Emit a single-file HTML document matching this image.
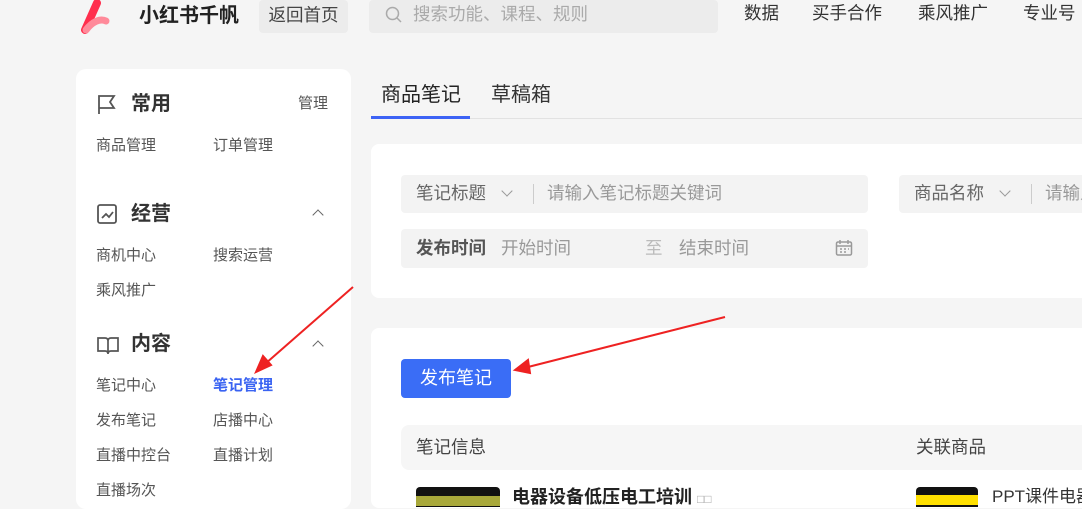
<!DOCTYPE html><html><head><meta charset="utf-8"><style>
*{margin:0;padding:0;box-sizing:border-box}
body{width:1082px;height:502px;overflow:hidden;background:#f5f5f5;font-family:"Liberation Sans","Noto Sans CJK SC",sans-serif;position:relative;color:#333}
.a{position:absolute;white-space:nowrap;line-height:1.2}
.nav{font-size:17.5px;color:#333;top:3px}
.side{left:76px;top:69px;width:275px;height:440px;background:#fff;border-radius:10px}
.st{font-size:20px;font-weight:bold;color:#333}
.it{font-size:15px;color:#555}
.card{background:#fff;border-radius:8px}
.gray{background:#f3f3f3;border-radius:4px}
.ph{font-size:17.5px;color:#999}
.chev{width:8px;height:8px;border-left:1.5px solid #666;border-top:1.5px solid #666;transform:rotate(45deg)}
</style></head><body>
<svg class="a" style="left:80px;top:0" width="32" height="36" viewBox="0 0 32 36"><path d="M5 30 L17 3" stroke="#ff2e4d" stroke-width="8" stroke-linecap="round"/><path d="M6 30 C12 22 20 18 26 21" stroke="#ff8a9a" stroke-width="7" fill="none" stroke-linecap="round"/></svg>
<div class="a" style="left:139px;top:4px;font-size:20px;font-weight:bold;color:#222">小红书千帆</div>
<div class="a gray" style="left:259px;top:0;width:89px;height:33px;background:#ececec;font-size:17.5px;color:#444;text-align:center;line-height:31px">返回首页</div>
<div class="a gray" style="left:369px;top:0;width:349px;height:33px;background:#ececec"></div>
<svg class="a" style="left:385px;top:6px" width="18" height="18"><circle cx="7.5" cy="7.5" r="6" stroke="#aaa" stroke-width="1.5" fill="none"/><path d="M12 12l4 4" stroke="#aaa" stroke-width="1.5"/></svg>
<div class="a ph" style="left:413px;top:4px;color:#aaa">搜索功能、课程、规则</div>
<div class="a nav" style="left:744px">数据</div><div class="a nav" style="left:812px">买手合作</div><div class="a nav" style="left:918px">乘风推广</div><div class="a nav" style="left:1023px">专业号</div>

<div class="a side"></div>
<svg class="a" style="left:96px;top:93px" width="22" height="22"><path d="M3 21V3h15l-4 6 4 6H3" stroke="#555" stroke-width="1.8" fill="none"/></svg>
<div class="a st" style="left:131px;top:92px">常用</div>
<div class="a it" style="left:298px;top:95px">管理</div>
<div class="a it" style="left:96px;top:137px">商品管理</div><div class="a it" style="left:213px;top:137px">订单管理</div>
<svg class="a" style="left:96px;top:203px" width="22" height="22"><rect x="2" y="2" width="18" height="18" rx="2" stroke="#555" stroke-width="1.8" fill="none"/><path d="M6 15l4-4 3 3 4-5" stroke="#555" stroke-width="1.8" fill="none"/></svg>
<div class="a st" style="left:131px;top:202px">经营</div>
<div class="a chev" style="left:314px;top:211px"></div>
<div class="a it" style="left:96px;top:247px">商机中心</div><div class="a it" style="left:213px;top:247px">搜索运营</div>
<div class="a it" style="left:96px;top:282px">乘风推广</div>
<svg class="a" style="left:96px;top:334px" width="24" height="22"><path d="M2 4h7c2 0 3 1 3 3v13c0-2-1-3-3-3H2zM22 4h-7c-2 0-3 1-3 3v13c0-2 1-3 3-3h7z" stroke="#555" stroke-width="1.7" fill="none"/></svg>
<div class="a st" style="left:131px;top:332px">内容</div>
<div class="a chev" style="left:314px;top:342px"></div>
<div class="a it" style="left:96px;top:377px">笔记中心</div><div class="a it" style="left:213px;top:377px;color:#3a63f2;font-weight:bold">笔记管理</div>
<div class="a it" style="left:96px;top:412px">发布笔记</div><div class="a it" style="left:213px;top:412px">店播中心</div>
<div class="a it" style="left:96px;top:447px">直播中控台</div><div class="a it" style="left:213px;top:447px">直播计划</div>
<div class="a it" style="left:96px;top:482px">直播场次</div>

<div class="a" style="left:371px;top:118px;width:711px;height:1px;background:#e2e2e2"></div>
<div class="a" style="left:381px;top:83px;font-size:20px;color:#222">商品笔记</div>
<div class="a" style="left:371px;top:116px;width:99px;height:3px;background:#3d63f5"></div>
<div class="a" style="left:491px;top:83px;font-size:20px;color:#333">草稿箱</div>

<div class="a card" style="left:371px;top:144px;width:720px;height:154px"></div>
<div class="a gray" style="left:401px;top:175px;width:467px;height:38px"></div>
<div class="a" style="left:416px;top:183px;font-size:17.5px;color:#666">笔记标题</div>
<div class="a chev" style="left:503px;top:187px;transform:rotate(225deg);border-color:#999"></div>
<div class="a" style="left:533px;top:184px;width:1px;height:20px;background:#ccc"></div>
<div class="a ph" style="left:547px;top:183px">请输入笔记标题关键词</div>
<div class="a gray" style="left:899px;top:175px;width:190px;height:38px"></div>
<div class="a" style="left:914px;top:183px;font-size:17.5px;color:#666">商品名称</div>
<div class="a chev" style="left:1001px;top:187px;transform:rotate(225deg);border-color:#999"></div>
<div class="a" style="left:1031px;top:184px;width:1px;height:20px;background:#ccc"></div>
<div class="a ph" style="left:1045px;top:183px">请输入</div>
<div class="a gray" style="left:401px;top:229px;width:467px;height:39px"></div>
<div class="a" style="left:416px;top:238px;font-size:17.5px;font-weight:bold;color:#555">发布时间</div>
<div class="a ph" style="left:501px;top:238px">开始时间</div>
<div class="a ph" style="left:645px;top:238px;color:#bbb">至</div>
<div class="a ph" style="left:679px;top:238px">结束时间</div>
<svg class="a" style="left:835px;top:239px" width="18" height="18"><rect x="1.5" y="3" width="15" height="13" rx="1.5" stroke="#999" stroke-width="1.5" fill="none"/><path d="M1.5 7h15M5 1v4M13 1v4M5 10h2M9 10h2M13 10h1M5 13h2M9 13h2" stroke="#999" stroke-width="1.5"/></svg>

<div class="a card" style="left:371px;top:328px;width:720px;height:180px"></div>
<div class="a" style="left:401px;top:359px;width:110px;height:39px;background:#3a6df6;border-radius:4px;color:#fff;font-size:18px;text-align:center;line-height:39px">发布笔记</div>
<div class="a" style="left:401px;top:425px;width:690px;height:45px;background:#f6f6f6;border-radius:8px"></div>
<div class="a" style="left:416px;top:437px;font-size:17.5px;color:#444">笔记信息</div>
<div class="a" style="left:916px;top:437px;font-size:17.5px;color:#444">关联商品</div>
<div class="a" style="left:416px;top:487px;width:84px;height:20px;background:#111;border-radius:4px 4px 0 0"></div>
<div class="a" style="left:416px;top:496px;width:84px;height:10px;background:#a8a83a"></div>
<div class="a" style="left:512px;top:487px;font-size:18px;font-weight:bold;color:#222">电器设备低压电工培训 <span style="color:#aaa;font-weight:normal;font-size:12px">□□</span></div>
<div class="a" style="left:916px;top:487px;width:62px;height:20px;background:#111;border-radius:4px 4px 0 0"></div>
<div class="a" style="left:916px;top:495px;width:62px;height:10px;background:#ffe000"></div>
<div class="a" style="left:992px;top:487px;font-size:17px;color:#333">PPT课件电器</div>

<svg class="a" style="left:0;top:0" width="1082" height="502"><g stroke="#ee2222" stroke-width="2" fill="#ee2222"><line x1="353" y1="287" x2="265" y2="364"/><path d="M256 372 L263 356 L271 365 Z"/><line x1="725" y1="317" x2="528" y2="367"/><path d="M515 370 L528 360 L530 373 Z"/></g></svg>
</body></html>
